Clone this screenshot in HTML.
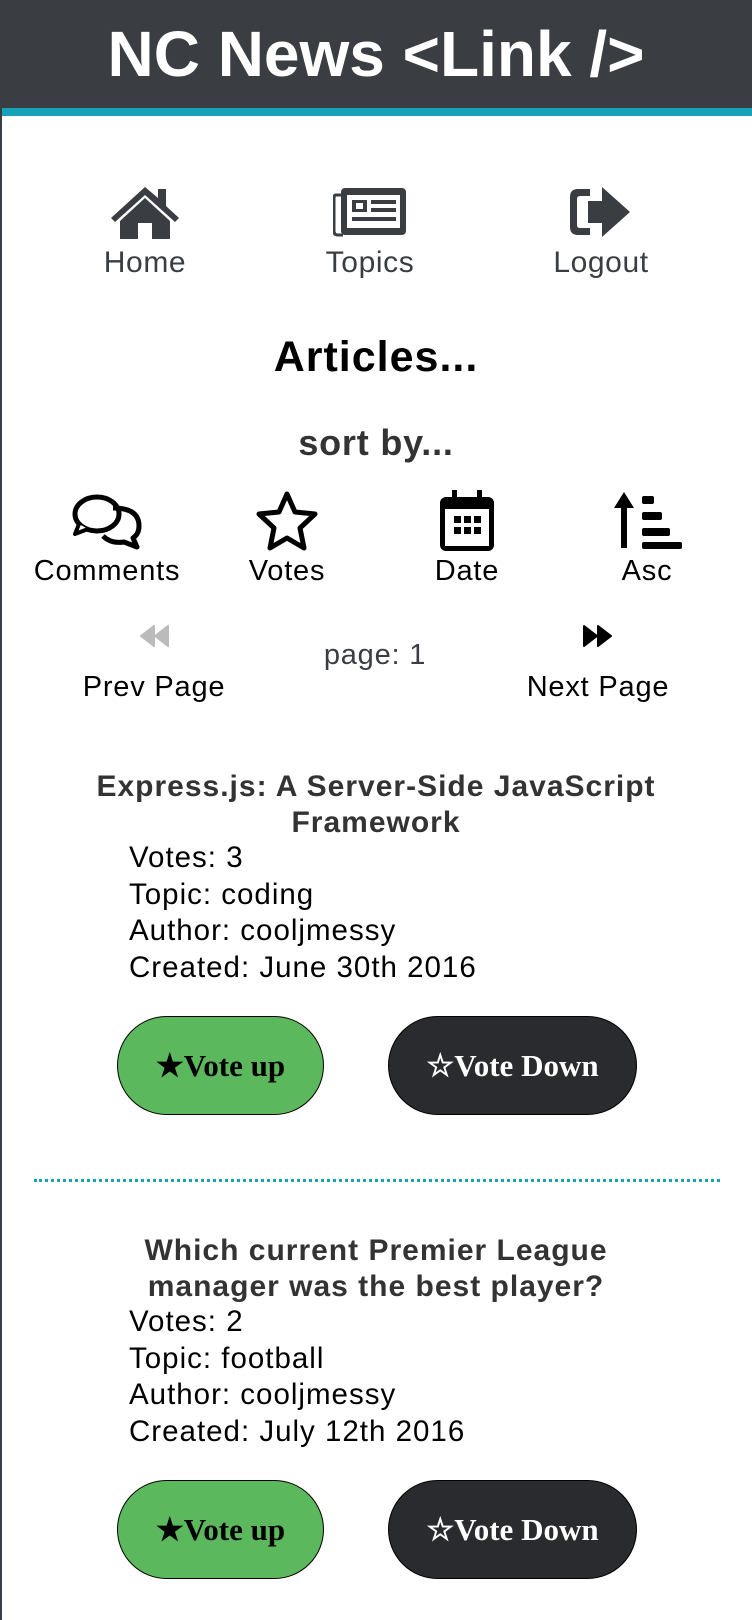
<!DOCTYPE html>
<html><head><meta charset="utf-8"><style>
*{margin:0;padding:0;box-sizing:border-box}
html,body{width:752px;height:1620px;background:#fff;overflow:hidden;font-family:"Liberation Sans",sans-serif}
.abs{position:absolute}
.c{position:absolute;transform:translateX(-50%);white-space:nowrap;text-align:center}
#lb{left:0;top:0;width:2px;height:1620px;background:#3a3d42}
#hdr{left:0;top:0;width:752px;height:108px;background:#3a3d42}
#tl{left:0;top:108px;width:752px;height:8px;background:#17a2b8}
h1{position:absolute;left:0;width:752px;text-align:center;top:17px;font-size:64px;color:#fff;font-weight:bold;letter-spacing:0px}
.nav{font-size:30px;color:#3a3d42;letter-spacing:0.6px}
.sort{font-size:29px;color:#000;letter-spacing:0.8px}
.det{position:absolute;left:129px;font-size:29.5px;line-height:36.5px;color:#000;letter-spacing:1px}
.ttl{position:absolute;left:40px;width:672px;text-align:center;font-size:30px;font-weight:bold;color:#333;line-height:36px;letter-spacing:1px}
.btn{position:absolute;border:1.5px solid #000;border-radius:50px;font-family:"Liberation Serif",serif;font-weight:bold;font-size:31px;display:flex;align-items:center;justify-content:center}
.up{background:#5cb85c;color:#000;width:207px;height:99px}
.dn{background:#2a2b2e;color:#fff;width:249px;height:99px}
</style></head><body>
<div class="abs" id="hdr"></div><div class="abs" id="tl"></div><div class="abs" id="lb"></div>
<h1>NC News &lt;Link /&gt;</h1>

<svg class="abs" style="left:108px;top:183px" width="74" height="56" viewBox="0 0 74 56"><path d="M37 4 L3 35 L7 39 L37 12 L67 39 L71 35 L58 23 V6 H50 V15 Z" fill="#3a3d42"/><path d="M12 38 L37 15 L62 38 V56 H44 V40 H30 V56 H12 Z" fill="#3a3d42"/></svg>
<svg class="abs" style="left:333px;top:187px" width="74" height="50" viewBox="0 0 74 50"><rect x="8" y="1" width="65" height="47" rx="4" fill="#3a3d42"/><path d="M8 8 H3 Q1 8 1 11 V44 Q1 48 5 48 H10" stroke="#3a3d42" stroke-width="3" fill="none"/><rect x="14" y="8" width="53" height="33" fill="#fff"/><rect x="19" y="13" width="15" height="12" fill="#3a3d42"/><rect x="23" y="16" width="7" height="6" fill="#fff"/><rect x="38" y="13" width="25" height="4" fill="#3a3d42"/><rect x="38" y="21" width="25" height="4" fill="#3a3d42"/><rect x="19" y="30" width="44" height="4" fill="#3a3d42"/></svg>
<svg class="abs" style="left:568px;top:187px" width="66" height="50" viewBox="0 0 66 50"><path d="M22 2 H10 Q2 2 2 10 V40 Q2 48 10 48 H22 V41 H12 Q9 41 9 38 V12 Q9 9 12 9 H22 Z" fill="#3a3d42"/><path d="M34 0 V14 H20 V36 H34 V50 L62 25 Z" fill="#3a3d42"/></svg>
<div class="c nav" style="left:145px;top:246px">Home</div>
<div class="c nav" style="left:370px;top:246px">Topics</div>
<div class="c nav" style="left:601px;top:246px">Logout</div>

<div class="c" style="left:376px;top:333px;font-size:43px;font-weight:bold;color:#000;letter-spacing:1px">Articles...</div>
<div class="c" style="left:376px;top:422px;font-size:36px;font-weight:bold;color:#333;letter-spacing:0.8px">sort by...</div>

<svg class="abs" style="left:71px;top:494px" width="74" height="56" viewBox="0 0 74 56"><ellipse cx="26" cy="20" rx="22" ry="17" fill="none" stroke="#000" stroke-width="5"/><path d="M8 30 L4 40 L17 35" fill="#fff" stroke="#000" stroke-width="4" stroke-linejoin="round"/><path d="M42 14 Q68 14 68 32 Q68 40 62 44 L66 53 L53 48 Q40 50 32 42" fill="none" stroke="#000" stroke-width="5" stroke-linejoin="round"/></svg>
<svg class="abs" style="left:253px;top:490px" width="68" height="62" viewBox="0 0 68 62"><path d="M34 4 L42 22 L62 24 L47 38 L51 58 L34 48 L17 58 L21 38 L6 24 L26 22 Z" fill="none" stroke="#000" stroke-width="5" stroke-linejoin="round"/></svg>
<svg class="abs" style="left:438px;top:489px" width="58" height="64" viewBox="0 0 58 64"><rect x="14" y="1" width="5" height="12" fill="#000"/><rect x="39" y="1" width="5" height="12" fill="#000"/><rect x="2" y="8" width="54" height="54" rx="6" fill="#000"/><rect x="7" y="20" width="44" height="37" fill="#fff"/><g fill="#000"><rect x="16" y="27" width="7" height="7"/><rect x="26" y="27" width="7" height="7"/><rect x="36" y="27" width="7" height="7"/><rect x="16" y="38" width="7" height="7"/><rect x="26" y="38" width="7" height="7"/><rect x="36" y="38" width="7" height="7"/></g></svg>
<svg class="abs" style="left:612px;top:490px" width="72" height="60" viewBox="0 0 72 60"><path d="M12 2 L22 18 H15 V58 H9 V18 H2 Z" fill="#000"/><rect x="30" y="6" width="12" height="8" rx="2" fill="#000"/><rect x="30" y="22" width="20" height="8" rx="2" fill="#000"/><rect x="30" y="38" width="28" height="8" rx="2" fill="#000"/><rect x="30" y="52" width="40" height="7" rx="2" fill="#000"/></svg>
<div class="c sort" style="left:107px;top:555px">Comments</div>
<div class="c sort" style="left:287px;top:555px">Votes</div>
<div class="c sort" style="left:467px;top:555px">Date</div>
<div class="c sort" style="left:647px;top:555px">Asc</div>

<svg class="abs" style="left:138px;top:625px" width="32" height="22" viewBox="0 0 32 22"><path d="M16 1 L3 11 L16 21 Z M30 1 L17 11 L30 21 Z" fill="#bbb" stroke="#bbb" stroke-width="2" stroke-linejoin="round"/></svg>
<svg class="abs" style="left:582px;top:625px" width="32" height="22" viewBox="0 0 32 22"><path d="M2 1 L15 11 L2 21 Z M16 1 L29 11 L16 21 Z" fill="#000" stroke="#000" stroke-width="2" stroke-linejoin="round"/></svg>
<div class="c sort" style="left:154px;top:671px">Prev Page</div>
<div class="c sort" style="left:375px;top:639px;color:#3a3d42">page: 1</div>
<div class="c sort" style="left:598px;top:671px">Next Page</div>

<div class="ttl" style="top:769px">Express.js: A Server-Side JavaScript<br>Framework</div>
<div class="det" style="top:840px">Votes: 3<br>Topic: coding<br>Author: cooljmessy<br>Created: June 30th 2016</div>
<div class="btn up" style="left:117px;top:1016px">★Vote up</div>
<div class="btn dn" style="left:388px;top:1016px">☆Vote Down</div>

<div class="abs" style="left:34px;top:1179px;width:686px;border-top:3px dotted #17a2b8"></div>

<div class="ttl" style="top:1233px">Which current Premier League<br>manager was the best player?</div>
<div class="det" style="top:1304px">Votes: 2<br>Topic: football<br>Author: cooljmessy<br>Created: July 12th 2016</div>
<div class="btn up" style="left:117px;top:1480px">★Vote up</div>
<div class="btn dn" style="left:388px;top:1480px">☆Vote Down</div>
</body></html>
